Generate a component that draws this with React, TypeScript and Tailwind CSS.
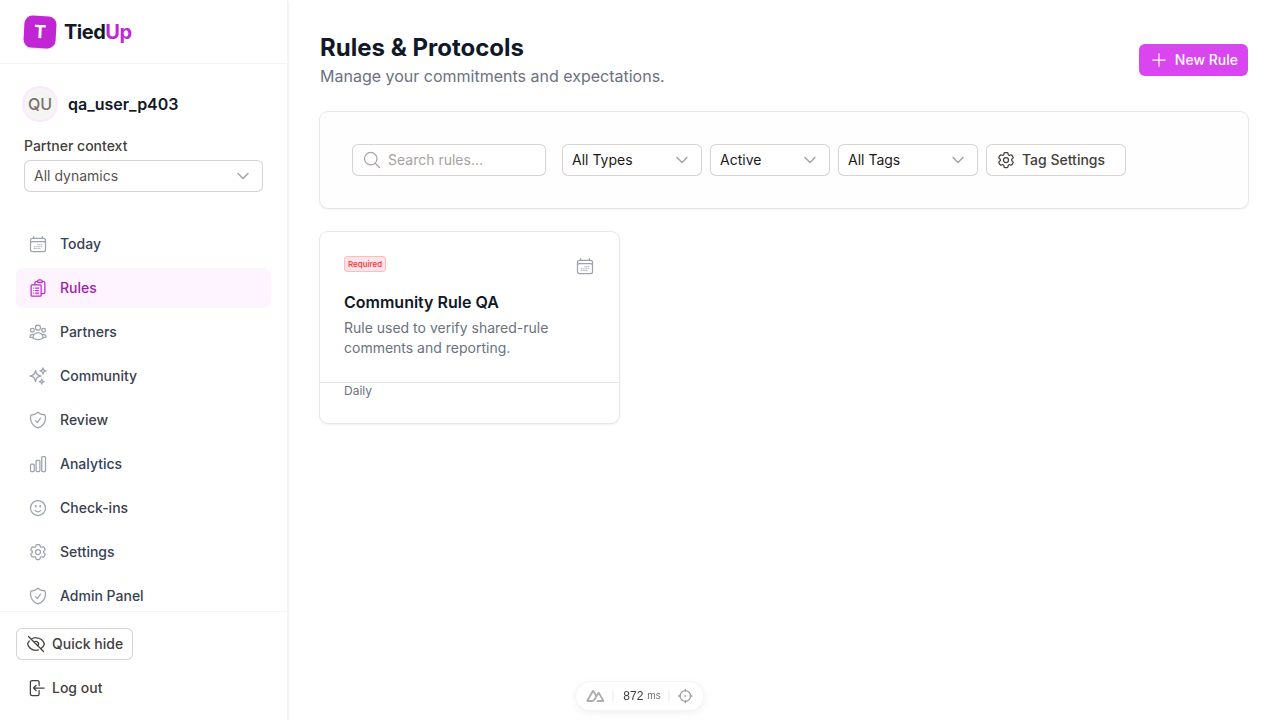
import type { ComponentType, ReactNode, SelectHTMLAttributes } from "react";
import { ChevronDown } from "lucide-react";
import {
  HiOutlineArrowLeftOnRectangle,
  HiOutlineCalendarDays,
  HiOutlineChartBar,
  HiOutlineClipboardDocumentList,
  HiOutlineCog6Tooth,
  HiOutlineEyeSlash,
  HiOutlineFaceSmile,
  HiOutlineMagnifyingGlass,
  HiOutlinePlus,
  HiOutlineShieldCheck,
  HiOutlineSparkles,
  HiOutlineUserGroup,
} from "react-icons/hi2";

type IconProps = { className?: string };

function NuxtIcon({ className }: IconProps) {
  return (
    <svg className={className} viewBox="0 0 324 324" fill="currentColor" aria-hidden="true">
      <path d="M181.767 270H302.211C306.037 270 309.795 269.003 313.108 267.107C316.421 265.211 319.172 262.484 321.084 259.2C322.996 255.915 324.002 252.19 324 248.399C323.998 244.607 322.989 240.883 321.074 237.601L240.187 98.744C238.275 95.461 235.525 92.734 232.213 90.839C228.901 88.943 225.143 87.945 221.318 87.945C217.494 87.945 213.736 88.943 210.424 90.839C207.112 92.734 204.361 95.461 202.449 98.744L181.767 134.272L141.329 64.798C139.416 61.515 136.664 58.788 133.351 56.893C130.038 54.998 126.28 54 122.454 54C118.629 54 114.871 54.998 111.558 56.893C108.245 58.788 105.493 61.515 103.58 64.798L2.926 237.601C1.011 240.883 0 244.607 0 248.399C0 252.19 1.004 255.915 2.916 259.2C4.828 262.484 7.579 265.211 10.892 267.107C14.205 269.003 17.963 270 21.789 270H97.394C127.349 270 149.44 256.959 164.641 231.517L201.546 168.172L221.313 134.272L280.637 236.1H201.546L181.767 270ZM96.161 236.065L43.398 236.054L122.49 100.291L161.953 168.172L135.531 213.543C125.436 230.051 113.968 236.065 96.161 236.065Z" />
    </svg>
  );
}

function TargetIcon({ className }: IconProps) {
  return (
    <svg
      className={className}
      viewBox="0 0 24 24"
      fill="none"
      stroke="currentColor"
      strokeWidth={2}
      strokeLinecap="round"
      aria-hidden="true"
    >
      <circle cx="12" cy="12" r="8" />
      <circle cx="12" cy="12" r="0.5" />
      <path d="M12 2v3M12 19v3M2 12h3M19 12h3" />
    </svg>
  );
}

const navItems: { label: string; icon: ComponentType<IconProps>; active?: boolean }[] = [
  { label: "Today", icon: HiOutlineCalendarDays },
  { label: "Rules", icon: HiOutlineClipboardDocumentList, active: true },
  { label: "Partners", icon: HiOutlineUserGroup },
  { label: "Community", icon: HiOutlineSparkles },
  { label: "Review", icon: HiOutlineShieldCheck },
  { label: "Analytics", icon: HiOutlineChartBar },
  { label: "Check-ins", icon: HiOutlineFaceSmile },
  { label: "Settings", icon: HiOutlineCog6Tooth },
  { label: "Admin Panel", icon: HiOutlineShieldCheck },
];

type SelectProps = SelectHTMLAttributes<HTMLSelectElement> & {
  wrapperClass: string;
  textClass: string;
  children: ReactNode;
};

function Select({ wrapperClass, textClass, children, ...rest }: SelectProps) {
  return (
    <div className={`relative ${wrapperClass}`}>
      <select
        {...rest}
        className={`h-8 w-full appearance-none rounded-md bg-white pr-9 pl-2.5 text-sm ring-1 ring-[#d6d3d1] ring-inset ${textClass}`}
      >
        {children}
      </select>
      <ChevronDown
        strokeWidth={1.75}
        className="pointer-events-none absolute top-1.5 right-2.5 size-5 text-[#a8a29e]"
      />
    </div>
  );
}

function Sidebar() {
  return (
    <aside className="flex w-72 shrink-0 flex-col border-r border-[#f3f4f6] bg-white shadow-sm">
      <div className="flex h-16 shrink-0 items-center gap-2 border-b border-[#f3f4f6] px-6">
        <div className="flex size-8 rotate-3 items-center justify-center rounded-lg bg-[#c026d3] text-lg font-bold text-white shadow-sm">
          T
        </div>
        <span className="text-xl font-bold tracking-tight text-[#111827]">
          Tied<span className="text-[#c026d3]">Up</span>
        </span>
      </div>

      <div className="flex min-h-0 flex-1 flex-col overflow-hidden">
        <div className="px-6 pt-6">
          <div className="flex items-center gap-3">
            <div className="flex size-8 items-center justify-center rounded-full bg-[#f5f5f4] font-medium text-[#78716c] ring-2 ring-[#fae8ff]">
              QU
            </div>
            <span className="font-semibold text-[#111827]">qa_user_p403</span>
          </div>
          <label htmlFor="partner-context" className="mt-4 block text-sm font-medium text-[#44403c]">
            Partner context
          </label>
          <Select id="partner-context" wrapperClass="mt-1" textClass="text-[#57534e]">
            <option>All dynamics</option>
          </Select>
        </div>

        <nav className="mt-8 flex flex-col gap-1 px-4">
          {navItems.map(({ label, icon: Icon, active }) => (
            <a
              key={label}
              href="#"
              aria-current={active ? "page" : undefined}
              className={`flex h-10 items-center gap-3 rounded-lg px-3 text-sm font-medium ${
                active ? "bg-[#fdf4ff] text-[#a21caf]" : "text-[#374151]"
              }`}
            >
              <Icon className={`size-5 ${active ? "text-[#c026d3]" : "text-[#9ca3af]"}`} />
              {label}
            </a>
          ))}
        </nav>
      </div>

      <div className="flex shrink-0 flex-col items-start gap-3 border-t border-[#f3f4f6] p-4">
        <button className="flex h-8 items-center gap-1.5 rounded-md px-2.5 text-sm font-medium text-[#44403c] ring-1 ring-[#d6d3d1] ring-inset">
          <HiOutlineEyeSlash className="size-5" />
          Quick hide
        </button>
        <button className="flex h-8 items-center gap-1.5 rounded-md px-2.5 text-sm font-medium text-[#44403c]">
          <HiOutlineArrowLeftOnRectangle className="size-5" />
          Log out
        </button>
      </div>
    </aside>
  );
}

function RuleCard() {
  return (
    <article className="rounded-lg bg-white shadow-sm ring-1 ring-[#e5e7eb]">
      <div className="p-6">
        <div className="flex items-start justify-between">
          <span className="flex h-4 items-center rounded-sm bg-[#ffe5e7] px-1 text-[8px] font-medium text-[#fb2c36] ring-1 ring-[#fdbcc0] ring-inset">
            Required
          </span>
          <HiOutlineCalendarDays className="size-5 text-[#9ca3af]" />
        </div>
        <h2 className="mt-3.5 font-semibold text-[#111827]">Community Rule QA</h2>
        <p className="mt-1 text-sm text-[#6b7280]">
          Rule used to verify shared-rule comments and reporting.
        </p>
      </div>
      <div className="border-t border-[#e5e7eb] px-6 pb-6 text-xs text-[#6b7280]">Daily</div>
    </article>
  );
}

export default function App() {
  return (
    <div className="flex h-screen overflow-hidden bg-white font-['Inter',sans-serif]">
      <Sidebar />

      <main className="min-w-0 flex-1 overflow-y-auto p-8">
        <header className="flex items-center justify-between">
          <div>
            <h1 className="text-2xl font-bold text-[#111827]">Rules &amp; Protocols</h1>
            <p className="text-[#6b7280]">Manage your commitments and expectations.</p>
          </div>
          <button className="flex h-8 items-center gap-1.5 rounded-md bg-[#d946ef] px-2.5 text-sm font-medium text-white">
            <HiOutlinePlus className="size-5" />
            New Rule
          </button>
        </header>

        <section className="mt-6 flex items-center gap-4 rounded-lg bg-[#fefefe] p-8 shadow-sm ring-1 ring-[#e5e7eb]">
          <div className="relative">
            <HiOutlineMagnifyingGlass className="absolute top-1.5 left-2.5 size-5 text-[#a8a29e]" />
            <input
              type="text"
              aria-label="Search rules"
              placeholder="Search rules..."
              className="block w-[194px] rounded-md bg-white py-1.5 pr-2.5 pl-9 text-sm ring-1 ring-[#d6d3d1] ring-inset placeholder:text-[#a8a29e]"
            />
          </div>
          <div className="flex gap-2">
            <Select aria-label="Type" wrapperClass="w-[140px]" textClass="text-[#1c1917]">
              <option>All Types</option>
            </Select>
            <Select aria-label="Status" wrapperClass="w-[120px]" textClass="text-[#1c1917]">
              <option>Active</option>
            </Select>
            <Select aria-label="Tags" wrapperClass="w-[140px]" textClass="text-[#1c1917]">
              <option>All Tags</option>
            </Select>
            <button className="flex h-8 w-[140px] items-center gap-1.5 rounded-md bg-white px-2.5 text-sm font-medium text-[#44403c] ring-1 ring-[#d6d3d1] ring-inset">
              <HiOutlineCog6Tooth className="size-5" />
              Tag Settings
            </button>
          </div>
        </section>

        <section className="mt-6 grid grid-cols-3 gap-4">
          <RuleCard />
        </section>
      </main>

      <div className="fixed bottom-2.5 left-1/2 flex h-7 -translate-x-1/2 items-center rounded-full bg-white px-2.5 font-['Liberation_Sans',sans-serif] text-xs text-neutral-700 shadow-[0_2px_8px_rgba(0,0,0,0.08)] ring-1 ring-neutral-100">
        <NuxtIcon className="size-[18px] text-[#adadad]" />
        <span className="mr-2.5 ml-2 h-2.5 w-px bg-neutral-200" />
        <span>872</span>
        <span className="ml-1 text-[10px] text-neutral-500">ms</span>
        <span className="mx-2 h-2.5 w-px bg-neutral-200" />
        <TargetIcon className="size-4 text-[#a3a3a3]" />
      </div>
    </div>
  );
}
